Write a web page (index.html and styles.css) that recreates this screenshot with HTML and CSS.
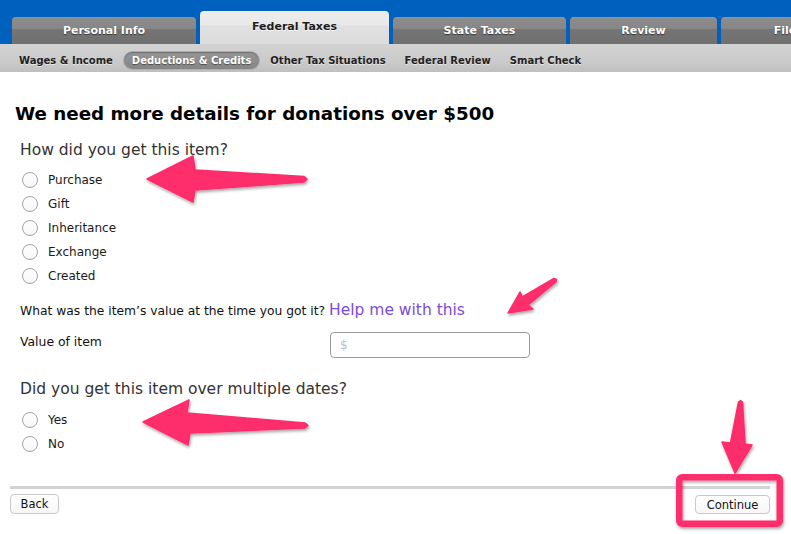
FILE: index.html
```html
<!DOCTYPE html>
<html lang="en">
<head>
<meta charset="utf-8">
<title>Federal Taxes – Donations</title>
<link rel="stylesheet" href="styles.css">
</head>
<body>
<header class="top">
  <nav class="tabs">
    <div class="tab tab-personal">Personal Info</div>
    <div class="tab tab-federal active">Federal Taxes</div>
    <div class="tab tab-state">State Taxes</div>
    <div class="tab tab-review">Review</div>
    <div class="tab tab-file">File</div>
  </nav>
  <nav class="subnav">
    <span class="sub-item">Wages &amp; Income</span>
    <span class="sub-item current">Deductions &amp; Credits</span>
    <span class="sub-item">Other Tax Situations</span>
    <span class="sub-item">Federal Review</span>
    <span class="sub-item">Smart Check</span>
  </nav>
</header>

<main class="page">
  <h1 class="title">We need more details for donations over $500</h1>

  <section class="question">
    <h2 class="q-label">How did you get this item?</h2>
    <ul class="radios">
      <li><label class="opt"><input type="radio" name="how"><span>Purchase</span></label></li>
      <li><label class="opt"><input type="radio" name="how"><span>Gift</span></label></li>
      <li><label class="opt"><input type="radio" name="how"><span>Inheritance</span></label></li>
      <li><label class="opt"><input type="radio" name="how"><span>Exchange</span></label></li>
      <li><label class="opt"><input type="radio" name="how"><span>Created</span></label></li>
    </ul>
  </section>

  <p class="value-prompt">What was the item’s value at the time you got it? <a class="help" href="#">Help me with this</a></p>

  <div class="field-row">
    <label class="field-label" for="val">Value of item</label>
    <input class="money" id="val" type="text" placeholder="$">
  </div>

  <section class="question q-dates">
    <h2 class="q-label">Did you get this item over multiple dates?</h2>
    <ul class="radios">
      <li><label class="opt"><input type="radio" name="dates"><span>Yes</span></label></li>
      <li><label class="opt"><input type="radio" name="dates"><span>No</span></label></li>
    </ul>
  </section>
</main>

<footer class="actions">
  <div class="rule"></div>
  <div class="buttons">
    <button class="btn btn-back" type="button">Back</button>
    <button class="btn btn-continue" type="button">Continue</button>
  </div>
</footer>

<svg class="annotations" width="791" height="534" viewBox="0 0 791 534" aria-hidden="true">
  <defs>
    <filter id="shadow" x="-20%" y="-20%" width="140%" height="140%">
      <feDropShadow dx="1" dy="2" stdDeviation="1.4" flood-color="#000" flood-opacity="0.35"/>
    </filter>
  </defs>
  <g class="marks" filter="url(#shadow)">
    <polygon points="147,179 193,156 195,170 304,176.5 307,179 304,182 195,190 193,202"/>
    <polygon points="508,313 520,292 522.3,296.8 553.9,278.4 556.5,279.5 556.1,281.6 528.1,305 533,309"/>
    <polygon points="143,422 189,400 187,413 305,423 308,425.5 305,428 190,433 188,445"/>
    <rect class="box" x="679.25" y="477.25" width="100.5" height="46.5" rx="3"/>
    <polygon points="735,473 722,442 730.5,443 738.5,402 740.5,400.5 742.5,402 745,444 752,445"/>
  </g>
</svg>
</body>
</html>
```
FILE: styles.css
```css
* { box-sizing: border-box; }

html, body {
  margin: 0;
  padding: 0;
  background: #fff;
  overflow: hidden;
}

body {
  position: relative;
  width: 791px;
  height: 534px;
  font-family: "Lucida Grande", "DejaVu Sans", "Noto Sans", sans-serif;
  color: #1a1a1a;
}

/* ---------- header tabs ---------- */
.top {
  background: #0060be;
  padding-top: 11px;
}

.tabs {
  display: flex;
  align-items: flex-end;
  gap: 4px;
  padding-left: 12px;
  height: 33px;
  overflow: hidden;
}

.tab {
  flex: none;
  height: 27px;
  border-radius: 4px 4px 0 0;
  background: linear-gradient(#999 0, #8c8c8c 1px, #868686 12px, #757575 12px, #707070 100%);
  color: #fff;
  font-weight: bold;
  font-size: 11px;
  display: flex;
  align-items: center;
  justify-content: center;
  text-shadow: 0 1px 1px rgba(0,0,0,0.55);
}

.tab-personal { width: 184px; }
.tab-federal  { width: 189px; }
.tab-state    { width: 173px; }
.tab-review   { width: 147px; }
.tab-file     { width: 128px; }

.tab.active {
  height: 33px;
  padding-bottom: 3px;
  color: #1e1e1e;
  text-shadow: 0 1px 0 rgba(255,255,255,0.7);
  background: linear-gradient(#f4f4f4 0, #ececec 2px, #e9e9e9 14px, #e0e0e0 15px, #dcdcdc 100%);
}

/* ---------- sub navigation ---------- */
.subnav {
  height: 28px;
  padding: 5px 0 0 11px;
  display: flex;
  align-items: center;
  gap: 3px;
  background: linear-gradient(#d3d3d3, #c9c9c9 70%, #bfbfbf);
}

.sub-item {
  height: 17px;
  line-height: 17px;
  padding: 0 8px;
  font-size: 10px;
  font-weight: bold;
  color: #222;
  white-space: nowrap;
  text-shadow: 0 1px 0 rgba(255,255,255,0.55);
  border-radius: 9px;
}

.sub-item.current {
  padding: 0 8px;
  color: #fff;
  background: linear-gradient(#949494, #868686);
  box-shadow: 0 0 0 1px #adadad, inset 0 1px 1px rgba(0,0,0,0.25);
  text-shadow: 0 1px 1px rgba(0,0,0,0.45);
}

/* ---------- main content ---------- */
.title {
  margin: 31px 0 0 15px;
  font-size: 18.3px;
  line-height: 22px;
  font-weight: bold;
  color: #000;
}

.q-label {
  margin: 15px 0 0 20px;
  font-size: 15.5px;
  line-height: 20px;
  font-weight: normal;
  color: #333;
}

.q-dates .q-label { margin-top: 21px; }

.radios {
  list-style: none;
  margin: 8px 0 0 22px;
  padding: 0;
}

.q-dates .radios { margin-top: 9px; }

.radios li {
  height: 24px;
  display: flex;
  align-items: center;
}

.opt {
  display: flex;
  align-items: center;
  gap: 10px;
  font-size: 12px;
  color: #1a1a1a;
}

.opt input {
  appearance: none;
  -webkit-appearance: none;
  margin: 0;
  width: 16px;
  height: 16px;
  border-radius: 50%;
  border: 1px solid #a3a3a3;
  background: linear-gradient(#fff, #f7f7f7);
}

.value-prompt {
  margin: 12px 0 0 20px;
  font-size: 12.3px;
  line-height: 20px;
  color: #111;
}

.help {
  font-size: 15.5px;
  color: #7b4dd6;
  text-decoration: none;
}

.field-row {
  display: flex;
  align-items: flex-start;
  margin: 11px 0 0 20px;
}

.field-label {
  width: 310px;
  font-size: 12.4px;
  line-height: 20px;
  color: #111;
}

.money {
  width: 200px;
  height: 26px;
  margin: 0;
  padding: 0 9px;
  border: 1px solid #9b9b9b;
  border-radius: 4px;
  font-family: inherit;
  font-size: 12px;
  background: #fff;
}

.money::placeholder { color: #bdbdbd; }

/* ---------- footer ---------- */
.actions {
  margin: 30px 21px 0 10px;
}

.rule {
  height: 3px;
  background: #d3d3d3;
}

.buttons {
  display: flex;
  justify-content: space-between;
  align-items: flex-start;
  margin-top: 5px;
}

.btn {
  height: 20px;
  padding: 0;
  border: 1px solid #c8c8c8;
  border-radius: 4px;
  background: linear-gradient(#fff, #f7f7f7);
  font-family: inherit;
  font-size: 11.5px;
  color: #111;
}

.btn-back { width: 49px; }
.btn-continue { width: 75px; margin-top: 1px; height: 19px; }

/* ---------- annotation overlay ---------- */
.annotations {
  position: absolute;
  top: 0;
  left: 0;
  pointer-events: none;
}

.marks polygon {
  fill: #fe2d6c;
  stroke: #fe2d6c;
  stroke-width: 1.5;
  stroke-linejoin: round;
}

.marks .box {
  fill: none;
  stroke: #fe2d6c;
  stroke-width: 6.5;
}
```
